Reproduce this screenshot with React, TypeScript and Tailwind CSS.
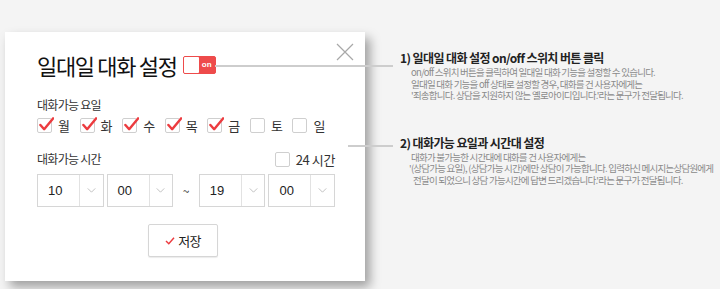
const font = { fontFamily: '"Noto Sans CJK KR", "Noto Sans", sans-serif' }

function Check({ className = '' }: { className?: string }) {
  return (
    <svg viewBox="0 0 16 16" className={className} fill="none">
      <path d="M1.5 8.5 L5.5 13 L15 1.5" stroke="#ec3b3f" strokeWidth="2.6" strokeLinecap="round" strokeLinejoin="round" />
    </svg>
  )
}

function Box({ checked, label }: { checked: boolean; label: string }) {
  return (
    <div className="flex items-center w-[43px]">
      <div className="relative w-[15px] h-[15px] border border-[#cfcfcf] bg-white rounded-[2px]">
        {checked && <Check className="absolute left-[1px] top-[-2px] w-[15px] h-[15px]" />}
      </div>
      <span className="ml-[6px] text-[13px] leading-none text-[#333]">{label}</span>
    </div>
  )
}

function Select({ value }: { value: string }) {
  return (
    <div className="flex w-[68px] h-[33px] border border-[#d6d6d6] bg-white">
      <div className="flex items-center w-[41px] pl-[10px] text-[13px] text-[#222]" style={{ fontFamily: '"Liberation Sans", sans-serif' }}>
        {value}
      </div>
      <div className="flex items-center justify-center flex-1 border-l border-[#e2e2e2]">
        <svg viewBox="0 0 10 6" className="w-[9px] h-[5px]" fill="none">
          <path d="M0.5 0.5 L5 5 L9.5 0.5" stroke="#b5b5b5" strokeWidth="1" />
        </svg>
      </div>
    </div>
  )
}

export default function App() {
  const days = [
    ['월', true],
    ['화', true],
    ['수', true],
    ['목', true],
    ['금', true],
    ['토', false],
    ['일', false],
  ] as const

  return (
    <div className="relative w-[720px] h-[289px] overflow-hidden bg-[#f4f4f4]" style={font}>
      <div className="flex pt-[32px] pl-[5px]">
        {/* dialog */}
        <div className="relative shrink-0 w-[360px] h-[249px] bg-white shadow-[5px_6px_10px_rgba(0,0,0,0.35)] pt-[20px] pl-[32px] pr-[30px] flex flex-col">
          <svg viewBox="0 0 18 18" className="absolute left-[331px] top-[11px] w-[18px] h-[18px]" fill="none">
            <path d="M1 1 L17 17 M17 1 L1 17" stroke="#a8a8a8" strokeWidth="1.2" />
          </svg>

          <div className="flex items-center h-[26px]">
            <span className="text-[22px] tracking-[-0.06em] text-[#111] leading-none">일대일 대화 설정</span>
            <div className="ml-[6px] flex w-[33px] h-[18px] border-[1.5px] border-[#ee4b4b] rounded-[2px] bg-[#ee4b4b]">
              <div className="w-[15px] h-full bg-white rounded-[1px]" />
              <div className="flex-1 flex items-center justify-center text-[8px] font-bold text-white leading-none" style={{ fontFamily: '"Liberation Sans", sans-serif' }}>
                on
              </div>
            </div>
          </div>

          <div className="mt-[20px] h-[14px] text-[12px] leading-[14px] tracking-[-0.06em] text-[#333]">대화가능 요일</div>

          <div className="mt-[5px] h-[16px] flex items-center">
            {days.map(([d, c]) => (
              <Box key={d} checked={c} label={d} />
            ))}
          </div>

          <div className="mt-[18px] h-[16px] flex items-center justify-between">
            <span className="text-[12px] leading-none tracking-[-0.06em] text-[#333]">대화가능 시간</span>
            <div className="flex items-center">
              <div className="w-[15px] h-[15px] border border-[#cfcfcf] rounded-[2px]" />
              <span className="ml-[6px] text-[13px] leading-none tracking-[-0.03em] text-[#333]">24 시간</span>
            </div>
          </div>

          <div className="mt-[7px] flex items-center gap-[3px]">
            <Select value="10" />
            <Select value="00" />
            <div className="w-[20px] text-center text-[12px] text-[#333]">~</div>
            <Select value="19" />
            <Select value="00" />
          </div>

          <button className="mt-[17px] ml-[111px] w-[70px] h-[33px] border border-[#d6d6d6] rounded-[2px] bg-white flex items-center justify-center gap-[3px] shadow-[0_1px_1px_rgba(0,0,0,0.08)]">
            <svg viewBox="0 0 12 10" className="w-[10px] h-[8px]" fill="none">
              <path d="M1 5 L4.5 8.5 L11 1" stroke="#ec3b3f" strokeWidth="1.8" />
            </svg>
            <span className="text-[13px] leading-none tracking-[-0.05em] text-[#222]">저장</span>
          </button>
        </div>

        {/* notes */}
        <div className="ml-[35px] pt-[19px] flex flex-col whitespace-nowrap">
          <div className="text-[12px] font-bold leading-[14px] tracking-[-0.05em] text-[#222]">1) 일대일 대화 설정 on/off 스위치 버튼 클릭</div>
          <div className="ml-[11px] mt-[2px] text-[9.5px] leading-[11.5px] tracking-[-0.08em] text-[#8a8a8a]">
            <p>on/off 스위치 버튼을 클릭하여 일대일 대화 기능을 설정할 수 있습니다.</p>
            <p>일대일 대화 기능을 off 상태로 설정할 경우, 대화를 건 사용자에게는</p>
            <p>'죄송합니다. 상담을 지원하지 않는 옐로아이디입니다.'라는 문구가 전달됩니다.</p>
          </div>

          <div className="mt-[34px] text-[12px] font-bold leading-[14px] tracking-[-0.05em] text-[#222]">2) 대화가능 요일과 시간대 설정</div>
          <div className="mt-[2px] text-[9.5px] leading-[11.5px] tracking-[-0.08em] text-[#8a8a8a]">
            <p className="ml-[11px]">대화가 불가능한 시간대에 대화를 건 사용자에게는</p>
            <p className="ml-[9px]">'(상담가능 요일), (상담가능 시간)에만 상담이 가능합니다. 입력하신 메시지는상담원에게</p>
            <p className="ml-[13px]">전달이 되었으니 상담 가능시간에 답변 드리겠습니다.'라는 문구가 전달됩니다.</p>
          </div>
        </div>
      </div>

      {/* connector lines */}
      <div className="absolute left-[215px] top-[65px] w-[178px] h-[2px] bg-[#cdcdcd]" />
      <div className="absolute left-[348px] top-[145px] w-[45px] h-[2px] bg-[#cdcdcd]" />
    </div>
  )
}
